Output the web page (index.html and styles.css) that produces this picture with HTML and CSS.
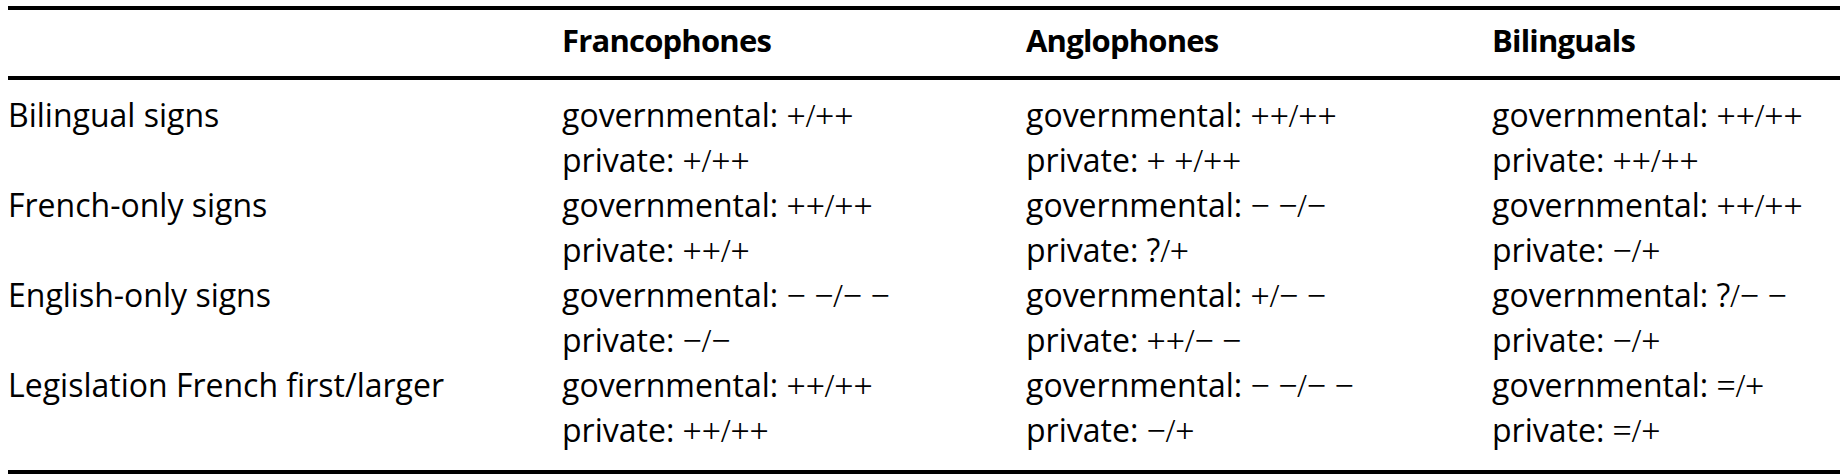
FILE: index.html
```html
<!DOCTYPE html>
<html lang="en">
<head>
<meta charset="utf-8">
<title>Attitudes toward signs</title>
<link rel="stylesheet" href="styles.css">
</head>
<body>
<table class="tbl">
  <colgroup>
    <col class="c1"><col class="c2"><col class="c3"><col class="c4">
  </colgroup>
  <thead>
    <tr>
      <th></th>
      <th>Francophones</th>
      <th>Anglophones</th>
      <th>Bilinguals</th>
    </tr>
  </thead>
  <tbody>
    <tr class="first">
      <td>Bilingual signs</td>
      <td><div>governmental: <span class="s">+/++</span></div><div>private: <span class="s">+/++</span></div></td>
      <td><div>governmental: <span class="s">++/++</span></div><div>private: <span class="s">+ +/++</span></div></td>
      <td><div>governmental: <span class="s">++/++</span></div><div>private: <span class="s">++/++</span></div></td>
    </tr>
    <tr>
      <td>French-only signs</td>
      <td><div>governmental: <span class="s">++/++</span></div><div>private: <span class="s">++/+</span></div></td>
      <td><div>governmental: <span class="s">− −/−</span></div><div>private: ?<span class="s">/+</span></div></td>
      <td><div>governmental: <span class="s">++/++</span></div><div>private: <span class="s">−/+</span></div></td>
    </tr>
    <tr>
      <td>English-only signs</td>
      <td><div>governmental: <span class="s">− −/− −</span></div><div>private: <span class="s">−/−</span></div></td>
      <td><div>governmental: <span class="s">+/− −</span></div><div>private: <span class="s">++/− −</span></div></td>
      <td><div>governmental: ?<span class="s">/− −</span></div><div>private: <span class="s">−/+</span></div></td>
    </tr>
    <tr class="last">
      <td>Legislation French first/larger</td>
      <td><div>governmental: <span class="s">++/++</span></div><div>private: <span class="s">++/++</span></div></td>
      <td><div>governmental: <span class="s">− −/− −</span></div><div>private: <span class="s">−/+</span></div></td>
      <td><div>governmental: <span class="s">=/+</span></div><div>private: <span class="s">=/+</span></div></td>
    </tr>
  </tbody>
</table>
</body>
</html>
```
FILE: styles.css
```css
html, body {
  background: #ffffff;
}
body {
  margin: 6px 6px 0 8px;
  font-family: "Open Sans", "Noto Sans", sans-serif;
  font-size: 32px;
  line-height: 45px;
  color: #000000;
}
.tbl {
  width: 1832px;
  table-layout: fixed;
  border-collapse: collapse;
  border-top: 4px solid #000;
  border-bottom: 4px solid #000;
}
.c1 { width: 554px; }
.c2 { width: 464px; }
.c3 { width: 466px; }
.c4 { width: 348px; }
.tbl th {
  text-align: left;
  font-weight: 700;
  font-size: 31px;
  letter-spacing: -0.8px;
  padding: 8px 0 13px 0;
  border-bottom: 4px solid #000;
}
.tbl td {
  vertical-align: top;
  padding: 0;
  white-space: nowrap;
}
.tbl td > div {
  height: 45px;
}
.tbl tr.first td {
  padding-top: 12px;
}
.tbl tr.last td {
  padding-bottom: 18px;
}
.s {
  font-family: "Liberation Serif", "DejaVu Serif", serif;
  font-size: 34px;
  line-height: 1;
}
```
